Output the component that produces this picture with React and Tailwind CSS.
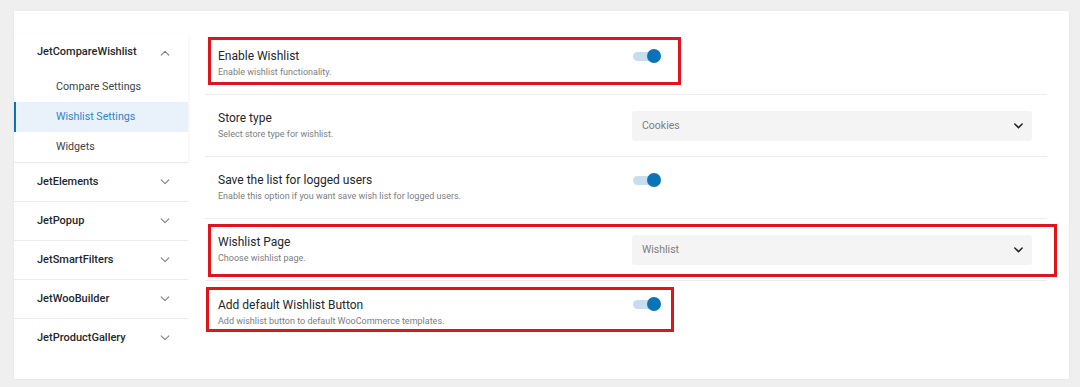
import React from "react";

const Chevron = ({ up = false, className = "", w = 11, h = 7, sw = 1.3 }) => (
  <svg width={w} height={h} viewBox="0 0 11 7" className={className} fill="none">
    <path
      d={up ? "M1 6L5.5 1.5L10 6" : "M1 1L5.5 5.5L10 1"}
      stroke="currentColor"
      strokeWidth={sw}
      strokeLinecap="round"
      strokeLinejoin="round"
    />
  </svg>
);

const Toggle = () => (
  <div className="relative w-[30px] h-[14px] mb-[16px]">
    <div className="absolute left-[1px] top-[3px] w-[25px] h-[9px] rounded-full bg-[#c8deef]" />
    <div className="absolute left-[15px] top-0 w-[14px] h-[14px] rounded-full bg-[#0b74b9]" />
  </div>
);

const Select = ({ value }) => (
  <div className="w-[400px] h-[30px] rounded-[3px] bg-[#f4f4f4] flex items-center justify-between pl-[10px] pr-[9px]">
    <span className="text-[10.5px] text-[#7d7d7d]">{value}</span>
    <Chevron className="text-[#222]" w={9} h={6} sw={1.8} />
  </div>
);

const Row = ({ title, desc, control, last }) => (
  <div className={`flex items-center h-[62px] pl-[13px] ${last ? "" : "border-b border-[#ececec]"}`}>
    <div className="w-[414px] flex flex-col gap-[2px]">
      <div className="text-[12px] leading-[16px] text-[#23282d]">{title}</div>
      <div className="text-[9px] leading-[13px] text-[#7b7e81]">{desc}</div>
    </div>
    <div className="w-[400px] flex items-center">{control}</div>
  </div>
);

const SideHead = ({ label, up, border = true }) => (
  <div className={`h-[39px] flex items-center justify-between pl-[23px] pr-[18px] ${border ? "border-t border-[#ececec]" : ""}`}>
    <span className="text-[11px] font-medium text-[#23282d]">{label}</span>
    <Chevron up={up} className="text-[#7b7e81]" w={10} h={6} sw={1.2} />
  </div>
);

export default function App() {
  return (
    <div
      className="relative w-[1080px] h-[387px] bg-[#efefef] pt-[11px] pl-[14px]"
      style={{ fontFamily: "Roboto, 'Liberation Sans', sans-serif" }}
    >
      <div className="w-[1055px] h-[368px] bg-white flex shadow-[0_0_2px_rgba(0,0,0,0.06)]">
        {/* Sidebar */}
        <div className="w-[174px] pt-[22px]">
          <div className="shadow-[1px_1px_3px_rgba(0,0,0,0.05)]">
            <SideHead label="JetCompareWishlist" up border={false} />
            <div className="h-[30px] flex items-center pl-[42px] text-[10.7px] text-[#3c434a]">Compare Settings</div>
            <div className="h-[30px] flex items-center pl-[40px] text-[10.7px] text-[#2e86c9] bg-[#e9f1fb] border-l-2 border-[#0b74b9]">
              Wishlist Settings
            </div>
            <div className="h-[30px] flex items-center pl-[42px] text-[10.7px] text-[#3c434a]">Widgets</div>
          </div>
          <SideHead label="JetElements" />
          <SideHead label="JetPopup" />
          <SideHead label="JetSmartFilters" />
          <SideHead label="JetWooBuilder" />
          <SideHead label="JetProductGallery" />
        </div>

        {/* Main */}
        <div className="w-[842px] ml-[17px] pt-[22px]">
          <Row title="Enable Wishlist" desc="Enable wishlist functionality." control={<Toggle />} />
          <Row title="Store type" desc="Select store type for wishlist." control={<Select value="Cookies" />} />
          <Row
            title="Save the list for logged users"
            desc="Enable this option if you want save wish list for logged users."
            control={<Toggle />}
          />
          <Row title="Wishlist Page" desc="Choose wishlist page." control={<Select value="Wishlist" />} />
          <Row
            title="Add default Wishlist Button"
            desc="Add wishlist button to default WooCommerce templates."
            control={<Toggle />}
            last
          />
        </div>
      </div>

      {/* Annotation boxes */}
      <div className="absolute left-[208px] top-[37px] w-[473px] h-[48px] border-[3px] border-[#e0141b]" />
      <div className="absolute left-[208px] top-[224px] w-[849px] h-[53px] border-[3px] border-[#e0141b]" />
      <div className="absolute left-[206px] top-[287px] w-[468px] h-[45px] border-[3px] border-[#e0141b]" />
    </div>
  );
}
